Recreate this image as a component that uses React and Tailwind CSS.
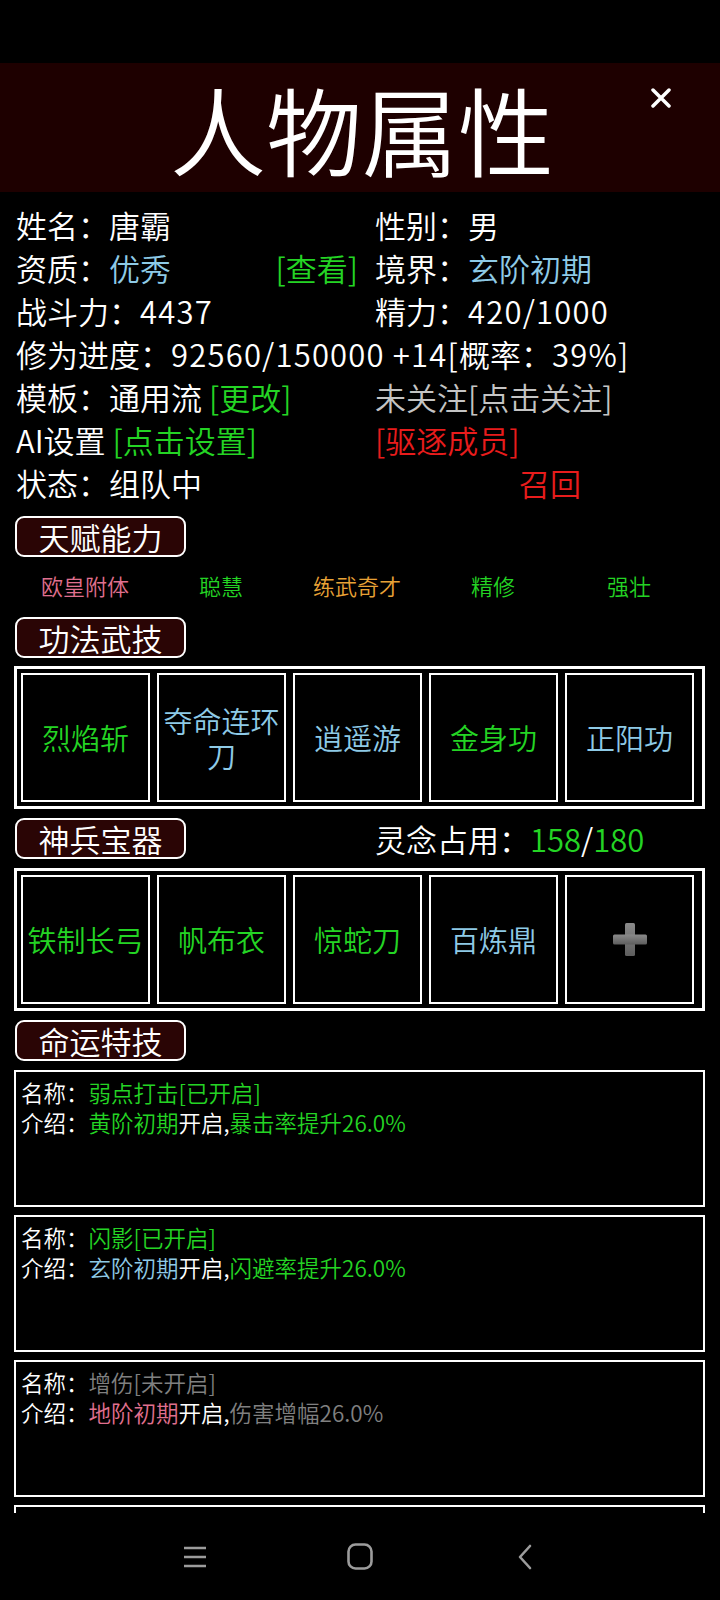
import React from 'react'

const G = 'text-[#24d424]'
const B = 'text-[#8ecae6]'
const R = 'text-[#e81c1c]'

const talents = [
  { name: '欧皇附体', cls: 'text-[#e0708f]' },
  { name: '聪慧', cls: G },
  { name: '练武奇才', cls: 'text-[#e8a236]' },
  { name: '精修', cls: G },
  { name: '强壮', cls: G },
]

const skills = [
  { name: '烈焰斩', cls: G },
  { name: '夺命连环刀', cls: B },
  { name: '逍遥游', cls: B },
  { name: '金身功', cls: G },
  { name: '正阳功', cls: B },
]

const gear = [
  { name: '铁制长弓', cls: G },
  { name: '帆布衣', cls: G },
  { name: '惊蛇刀', cls: G },
  { name: '百炼鼎', cls: B },
]

// digits in the game font run a bit wider than Noto's
function N({ children, className = '' }) {
  return <span className={`tracking-[1.2px] ${className}`}>{children}</span>
}

function Tag({ children }) {
  return (
    <div className="w-[171px] h-[41px] ml-[15px] shrink-0 rounded-[9px] border-2 border-white bg-[#2a0505] flex items-center justify-center text-[31px] leading-none">
      {children}
    </div>
  )
}

function Cell({ children, cls }) {
  return (
    <div className={`w-[129px] h-[129px] shrink-0 border-2 border-white flex items-center justify-center text-center text-[29px] leading-[35px] px-[1px] ${cls || ''}`}>
      {children}
    </div>
  )
}

function PlusIcon() {
  return (
    <svg width="34" height="33" viewBox="0 0 34 33">
      <defs>
        <linearGradient id="pg" x1="0" y1="0" x2="0" y2="1">
          <stop offset="0" stopColor="#8a8a8a" />
          <stop offset="1" stopColor="#5e5e5e" />
        </linearGradient>
      </defs>
      <rect x="12" y="0" width="10" height="33" rx="1.5" fill="url(#pg)" />
      <rect x="0" y="11.5" width="34" height="10" rx="1.5" fill="url(#pg)" />
    </svg>
  )
}

function FateBox({ children }) {
  return (
    <div className="ml-[14px] w-[691px] h-[137px] border-2 border-white px-[5px] pt-[5px] text-[22.5px] leading-[30px] mb-[8px] whitespace-nowrap">
      {children}
    </div>
  )
}

export default function App() {
  return (
    <div className="h-[1600px] flex flex-col bg-black text-white font-[350] overflow-hidden font-['Noto_Sans_CJK_SC','Noto_Sans',sans-serif]">
      <div className="h-[63px] shrink-0" />

      {/* header */}
      <div className="relative h-[129px] shrink-0 bg-[#1e0000] flex items-center justify-center">
        <span className="text-[96px] leading-none pl-[4px]">人物属性</span>
        <svg className="absolute left-[651px] top-[25px]" width="20" height="20" viewBox="0 0 20 20">
          <path d="M2 2 L18 18 M18 2 L2 18" stroke="white" strokeWidth="3.5" strokeLinecap="round" />
        </svg>
      </div>

      <div className="flex-1 overflow-hidden">
        {/* basic info */}
        <div className="grid grid-cols-[359px_1fr] pl-4 pt-[11px] text-[31px] leading-[43px] whitespace-nowrap">
          <div>姓名：唐霸</div>
          <div>性别：男</div>
          <div className="flex justify-between pr-[17px]">
            <span>资质：<span className={B}>优秀</span></span>
            <span className={G}>[查看]</span>
          </div>
          <div>境界：<span className={B}>玄阶初期</span></div>
          <div>战斗力：<N>4437</N></div>
          <div>精力：<N>420/1000</N></div>
          <div className="col-span-2">修为进度：<N>92560/150000 +14[</N>概率：<N>39%]</N></div>
          <div>模板：通用流 <span className={G}>[更改]</span></div>
          <div className="text-[#c4c4c4]">未关注[点击关注]</div>
          <div>AI设置 <span className={G}>[点击设置]</span></div>
          <div className={R}>[驱逐成员]</div>
          <div>状态：组队中</div>
          <div className={`pl-[144px] ${R}`}>召回</div>
        </div>

        {/* talents */}
        <div className="mt-[12px]">
          <Tag>天赋能力</Tag>
        </div>
        <div className="h-[60px] pb-[4px] ml-[17px] w-[680px] grid grid-cols-5 items-center text-center text-[22px] leading-none">
          {talents.map((t) => (
            <span key={t.name} className={t.cls}>{t.name}</span>
          ))}
        </div>

        {/* skills */}
        <Tag>功法武技</Tag>
        <div className="mt-[8px] ml-[14px] w-[691px] h-[143px] border-[3px] border-white p-[4px] flex gap-[7px]">
          {skills.map((s) => (
            <Cell key={s.name} cls={s.cls}>{s.name}</Cell>
          ))}
        </div>

        {/* gear */}
        <div className="mt-[9px] flex items-center">
          <Tag>神兵宝器</Tag>
          <span className="ml-[189px] text-[31px] leading-none">
            灵念占用：<span className={G}>158</span>/<span className={G}>180</span>
          </span>
        </div>
        <div className="mt-[9px] ml-[14px] w-[691px] h-[143px] border-[3px] border-white p-[4px] flex gap-[7px]">
          {gear.map((s) => (
            <Cell key={s.name} cls={s.cls}>{s.name}</Cell>
          ))}
          <Cell>
            <PlusIcon />
          </Cell>
        </div>

        {/* fate skills */}
        <div className="mt-[9px]">
          <Tag>命运特技</Tag>
        </div>
        <div className="mt-[9px]">
          <FateBox>
            <div>名称：<span className={G}>弱点打击[已开启]</span></div>
            <div>介绍：<span className={G}>黄阶初期</span>开启,<span className={G}>暴击率提升26.0%</span></div>
          </FateBox>
          <FateBox>
            <div>名称：<span className={G}>闪影[已开启]</span></div>
            <div>介绍：<span className={B}>玄阶初期</span>开启,<span className={G}>闪避率提升26.0%</span></div>
          </FateBox>
          <FateBox>
            <div>名称：<span className="text-[#808080]">增伤[未开启]</span></div>
            <div>介绍：<span className="text-[#e0708f]">地阶初期</span>开启,<span className="text-[#808080]">伤害增幅26.0%</span></div>
          </FateBox>
          <FateBox />
        </div>
      </div>

      {/* system nav */}
      <div className="h-[87px] shrink-0 bg-black flex justify-center items-center">
        <div className="w-[165px] flex justify-center">
          <svg width="24" height="22" viewBox="0 0 24 22">
            <path d="M1 2 H23 M1 11 H23 M1 20 H23" stroke="#9c9c9c" strokeWidth="2.6" />
          </svg>
        </div>
        <div className="w-[165px] flex justify-center">
          <svg width="26" height="27" viewBox="0 0 26 27">
            <rect x="1.5" y="1.5" width="23" height="24" rx="7" fill="none" stroke="#9c9c9c" strokeWidth="2.6" />
          </svg>
        </div>
        <div className="w-[165px] flex justify-center">
          <svg width="16" height="26" viewBox="0 0 16 26">
            <path d="M13 2 L3 13 L13 24" fill="none" stroke="#9c9c9c" strokeWidth="2.6" strokeLinejoin="round" strokeLinecap="round" />
          </svg>
        </div>
      </div>
    </div>
  )
}
